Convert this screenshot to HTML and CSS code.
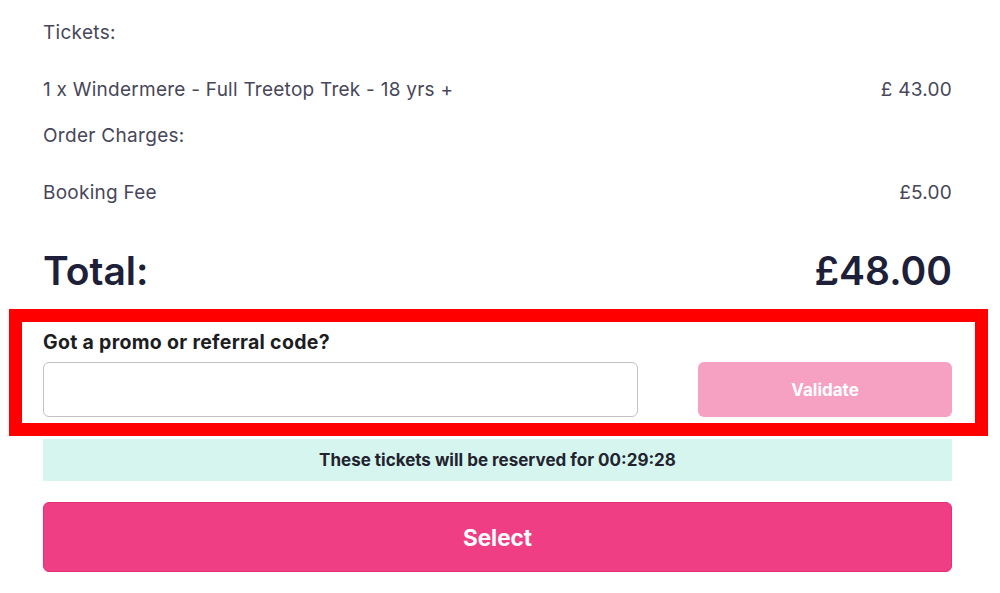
FILE: index.html
```html
<!DOCTYPE html>
<html lang="en">
<head>
<meta charset="utf-8">
<title>Order summary</title>
<link rel="stylesheet" href="styles.css">
</head>
<body>
<main class="summary">
  <div class="heading">Tickets:</div>
  <div class="row row-item">
    <span>1 x Windermere - Full Treetop Trek - 18 yrs +</span>
    <span>£ 43.00</span>
  </div>
  <div class="heading heading-charges">Order Charges:</div>
  <div class="row row-item">
    <span>Booking Fee</span>
    <span>£5.00</span>
  </div>
  <div class="row total">
    <span>Total:</span>
    <span>£48.00</span>
  </div>
  <section class="promo-highlight">
    <label class="promo-label" for="promo">Got a promo or referral code?</label>
    <div class="promo-row">
      <input class="promo-input" id="promo" type="text">
      <button class="validate" type="button">Validate</button>
    </div>
  </section>
  <div class="reserve">These tickets will be reserved for 00:29:28</div>
  <button class="select" type="button">Select</button>
</main>
</body>
</html>
```

FILE: styles.css
```css
* { box-sizing: border-box; }

html, body {
  margin: 0;
  padding: 0;
  background: #ffffff;
}

body {
  font-family: Inter, "Noto Sans", "Liberation Sans", sans-serif;
  color: #474759;
}

.summary {
  width: 1000px;
  padding: 19px 48px 0 43px;
}

.heading {
  font-size: 19px;
  line-height: 28px;
  letter-spacing: 0.3px;
  color: #474759;
}

.heading-charges {
  margin-top: 18px;
}

.row {
  display: flex;
  justify-content: space-between;
  align-items: center;
}

.row-item {
  margin-top: 29px;
  font-size: 19px;
  line-height: 28px;
  letter-spacing: 0.25px;
  color: #474759;
}

.total {
  margin-top: 40px;
  font-size: 39px;
  line-height: 48px;
  font-weight: 600;
  letter-spacing: 0;
  color: #1e1f38;
}

.promo-highlight {
  margin: 14px -36px 0 -34px;
  border: 13px solid #ff0000;
  padding: 9px 23px 6px 21px;
}

.promo-label {
  display: block;
  font-size: 19.5px;
  line-height: 22px;
  font-weight: 700;
  letter-spacing: 0.3px;
  color: #1d1d1f;
}

.promo-row {
  display: flex;
  gap: 60px;
  margin-top: 9px;
}

.promo-input {
  flex: 1;
  height: 55px;
  border: 1px solid #c2c2c6;
  border-radius: 6px;
  font: inherit;
  padding: 0 14px;
  background: #fff;
}

.validate {
  width: 254px;
  height: 55px;
  border: none;
  border-radius: 6px;
  background: #f6a1c1;
  color: #ffffff;
  font-family: inherit;
  font-size: 17px;
  font-weight: 700;
}

.reserve {
  margin-top: 3px;
  height: 42px;
  display: flex;
  align-items: center;
  justify-content: center;
  background: #d5f5ee;
  color: #23232f;
  font-size: 17px;
  font-weight: 700;
}

.select {
  display: block;
  width: 100%;
  margin-top: 21px;
  height: 70px;
  border: 1px solid #e52f79;
  border-radius: 6px;
  background: #f03e85;
  color: #ffffff;
  font-family: inherit;
  font-size: 22.5px;
  font-weight: 700;
}
```
